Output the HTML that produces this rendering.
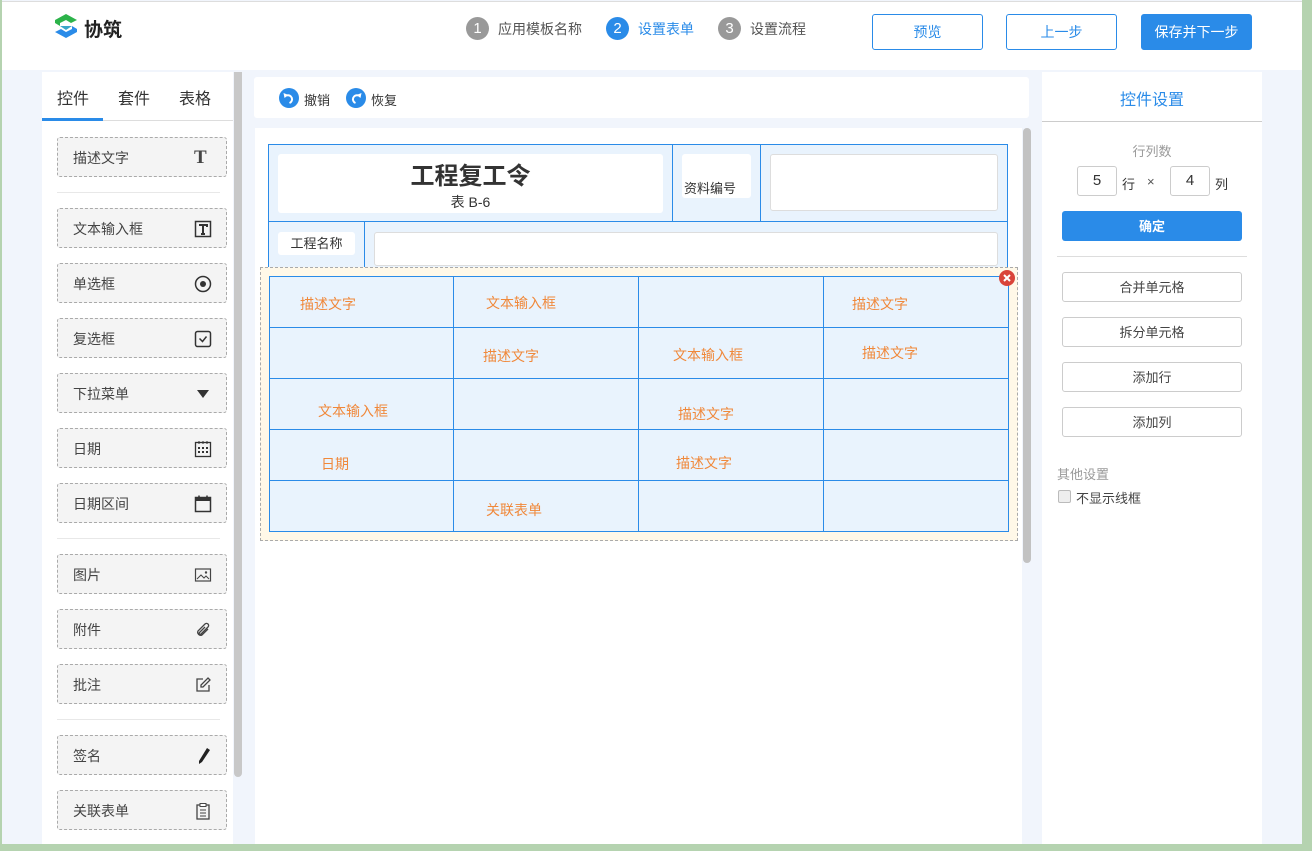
<!DOCTYPE html>
<html><head><meta charset="utf-8"><style>
*{box-sizing:border-box;margin:0;padding:0}
body{width:1312px;height:851px;overflow:hidden;background:#b5d3b0;font-family:"Liberation Sans","Noto Sans CJK SC",sans-serif;position:relative;color:#333}
.abs{position:absolute}
.app{position:absolute;left:2px;top:0;width:1300px;height:844px;background:#f1f5fc}
.hdr{position:absolute;left:2px;top:1px;width:1300px;height:69px;background:#fff;border-top:1px solid #ddd}
.step{position:absolute;top:17px;font-size:14px;color:#555;display:flex;align-items:center}
.step i{font-style:normal;display:inline-block;width:23px;height:23px;border-radius:50%;background:#999;color:#fff;text-align:center;line-height:23px;font-size:15px;margin-right:9px}
.btn{position:absolute;top:14px;height:36px;border:1px solid #2a8be8;border-radius:3px;color:#2a8be8;font-size:14px;text-align:center;line-height:34px;background:#fff}
.item{position:absolute;left:57px;width:170px;height:40px;border:1px dashed #aaa;border-radius:3px;background:#f4f4f4;font-size:14px;color:#444;line-height:40px;padding-left:15px}
.item .ic{position:absolute;right:14px;top:11px;width:18px;height:18px}
.sep{position:absolute;left:57px;width:163px;height:1px;background:#e8e8e8}
.cell{position:absolute;color:#f0883a;font-size:14px}
.rb{position:absolute;left:1062px;width:180px;height:30px;border:1px solid #ccc;border-radius:3px;font-size:13px;color:#444;text-align:center;line-height:29px;background:#fff}
</style></head><body>
<div class="app"></div>
<div class="hdr"></div>
<svg class="abs" style="left:53px;top:13px" width="26" height="26" viewBox="0 0 26 26">
<path d="M13 1 L24 7 L18 10 L13 7 L7 10 L7 13 L2 10 L2 7 Z" fill="#2cb34a"/>
<path d="M13 25 L2 19 L8 16 L13 19 L19 16 L19 13 L24 16 L24 19 Z" fill="#2a8be8"/>
<path d="M7 13 L19 13 L13 17 Z" fill="#3aa6c8"/>
</svg>
<div class="abs" style="left:84px;top:15px;font-size:19px;font-weight:bold;color:#222">协筑</div>
<div class="step" style="left:466px"><i>1</i>应用模板名称</div>
<div class="step" style="left:606px;color:#2a8be8"><i style="background:#2a8be8">2</i>设置表单</div>
<div class="step" style="left:718px"><i>3</i>设置流程</div>
<div class="btn" style="left:872px;width:111px">预览</div>
<div class="btn" style="left:1006px;width:111px">上一步</div>
<div class="btn" style="left:1141px;width:111px;background:#2a8be8;color:#fff">保存并下一步</div>

<div class="abs" style="left:42px;top:72px;width:191px;height:772px;background:#fff"></div>
<div class="abs" style="left:234px;top:72px;width:8px;height:705px;background:#c8c8c8;border-radius:0 0 4px 4px"></div>
<div class="abs" style="left:42px;top:120px;width:191px;height:1px;background:#ddd"></div>
<div class="abs" style="left:42px;top:118px;width:61px;height:3px;background:#2a8be8"></div>
<div class="abs" style="left:57px;top:85px;font-size:16px;color:#333">控件</div>
<div class="abs" style="left:118px;top:85px;font-size:16px;color:#333">套件</div>
<div class="abs" style="left:179px;top:85px;font-size:16px;color:#333">表格</div>

<div class="item" style="top:137px">描述文字<span class="ic" style="font-family:'Liberation Serif',serif;font-weight:bold;font-size:19px;line-height:18px;top:11px">T</span></div>
<div class="sep" style="top:192px"></div>
<div class="item" style="top:208px">文本输入框<svg class="ic" viewBox="0 0 18 18"><rect x="1.5" y="1.5" width="15" height="15" fill="none" stroke="#333" stroke-width="1.5"/><path d="M5 5h8v2M9 5v9M7 14h4" stroke="#333" stroke-width="2" fill="none"/></svg></div>
<div class="item" style="top:263px">单选框<svg class="ic" viewBox="0 0 18 18"><circle cx="9" cy="9" r="7.5" fill="none" stroke="#333" stroke-width="1.5"/><circle cx="9" cy="9" r="3" fill="#333"/></svg></div>
<div class="item" style="top:318px">复选框<svg class="ic" viewBox="0 0 18 18"><rect x="1.5" y="1.5" width="15" height="15" rx="2" fill="none" stroke="#333" stroke-width="1.5"/><path d="M5.5 8.5l3 3 4-5" stroke="#333" stroke-width="1.5" fill="none"/></svg></div>
<div class="item" style="top:373px">下拉菜单<svg class="ic" viewBox="0 0 18 18"><path d="M3 5h12l-6 8z" fill="#333"/></svg></div>
<div class="item" style="top:428px">日期<svg class="ic" viewBox="0 0 18 18"><rect x="1.5" y="2.5" width="15" height="14" fill="none" stroke="#333" stroke-width="1.3"/><path d="M5 1v3M9 1v3M13 1v3" stroke="#333"/><g fill="#333"><rect x="4" y="7" width="2" height="2"/><rect x="8" y="7" width="2" height="2"/><rect x="12" y="7" width="2" height="2"/><rect x="4" y="11" width="2" height="2"/><rect x="8" y="11" width="2" height="2"/><rect x="12" y="11" width="2" height="2"/></g></svg></div>
<div class="item" style="top:483px">日期区间<svg class="ic" viewBox="0 0 18 18"><rect x="1.5" y="2.5" width="15" height="14" fill="none" stroke="#333" stroke-width="1.5"/><rect x="1.5" y="2.5" width="15" height="3.5" fill="#333"/><path d="M5 0.5v3M13 0.5v3" stroke="#333" stroke-width="1.5"/></svg></div>
<div class="sep" style="top:538px"></div>
<div class="item" style="top:554px">图片<svg class="ic" viewBox="0 0 18 18"><rect x="1.5" y="3" width="15" height="12" fill="none" stroke="#444" stroke-width="1.2"/><path d="M3 13l4-4 3 3 2-2 3 3" stroke="#444" fill="none"/><circle cx="12" cy="6.5" r="1.2" fill="#444"/></svg></div>
<div class="item" style="top:609px">附件<svg class="ic" viewBox="0 0 18 18"><path d="M14 8l-6 6a3 3 0 01-4-4l7-7a2 2 0 013 3l-7 7a1 1 0 01-1.5-1.5L11 6" stroke="#444" stroke-width="1.3" fill="none"/></svg></div>
<div class="item" style="top:664px">批注<svg class="ic" viewBox="0 0 18 18"><path d="M9 3H3v12h12V9" stroke="#444" stroke-width="1.3" fill="none"/><path d="M14 2l2 2-7 7H7V9z" stroke="#444" stroke-width="1.3" fill="none"/></svg></div>
<div class="sep" style="top:719px"></div>
<div class="item" style="top:735px">签名<svg class="ic" viewBox="0 0 18 18"><path d="M13 1l3 2-8 12-3 2 0-3z" fill="#222"/></svg></div>
<div class="item" style="top:790px">关联表单<svg class="ic" viewBox="0 0 18 18"><rect x="3" y="3" width="12" height="14" fill="none" stroke="#444" stroke-width="1.3"/><rect x="6" y="1.5" width="6" height="3" fill="#fff" stroke="#444"/><path d="M6 8h6M6 11h6M6 14h6" stroke="#444"/></svg></div>

<div class="abs" style="left:254px;top:77px;width:775px;height:41px;background:#fff;border-radius:3px"></div>
<svg class="abs" style="left:279px;top:88px" width="20" height="20" viewBox="0 0 20 20"><circle cx="10" cy="10" r="10" fill="#2a8be8"/><path d="M7.5 7.5a4 4 0 113 7.5" stroke="#fff" stroke-width="2" fill="none"/><path d="M4.5 5l1 5 4-3z" fill="#fff"/></svg>
<div class="abs" style="left:304px;top:90px;font-size:13px">撤销</div>
<svg class="abs" style="left:346px;top:88px" width="20" height="20" viewBox="0 0 20 20"><circle cx="10" cy="10" r="10" fill="#2a8be8"/><path d="M12.5 7.5a4 4 0 10-3 7.5" stroke="#fff" stroke-width="2" fill="none"/><path d="M15.5 5l-1 5-4-3z" fill="#fff"/></svg>
<div class="abs" style="left:371px;top:90px;font-size:13px">恢复</div>
<div class="abs" style="left:255px;top:128px;width:767px;height:716px;background:#fff"></div>
<div class="abs" style="left:1023px;top:128px;width:8px;height:435px;background:#c2c2c2;border-radius:4px"></div>

<div class="abs" style="left:268px;top:144px;width:740px;height:125px;background:#e9f3fd;border:1px solid #2a8be8;border-bottom:none"></div>
<div class="abs" style="left:268px;top:221px;width:740px;height:1px;background:#2a8be8"></div>
<div class="abs" style="left:672px;top:144px;width:1px;height:78px;background:#2a8be8"></div>
<div class="abs" style="left:760px;top:144px;width:1px;height:78px;background:#2a8be8"></div>
<div class="abs" style="left:364px;top:222px;width:1px;height:47px;background:#2a8be8"></div>
<div class="abs" style="left:278px;top:154px;width:385px;height:59px;background:#fff;border-radius:3px"></div>
<div class="abs" style="left:278px;top:156px;width:385px;text-align:center;font-size:24px;font-weight:bold;color:#333">工程复工令</div>
<div class="abs" style="left:278px;top:192px;width:385px;text-align:center;font-size:14px;color:#333">表 B-6</div>
<div class="abs" style="left:682px;top:154px;width:69px;height:44px;background:#fff;border-radius:3px"></div>
<div class="abs" style="left:684px;top:178px;font-size:13px">资料编号</div>
<div class="abs" style="left:770px;top:154px;width:228px;height:57px;background:#fff;border:1px solid #ddd;border-radius:3px"></div>
<div class="abs" style="left:278px;top:232px;width:77px;height:23px;background:#fff;border-radius:3px;font-size:13px;text-align:center;line-height:23px">工程名称</div>
<div class="abs" style="left:374px;top:232px;width:624px;height:34px;background:#fff;border:1px solid #ddd;border-radius:3px"></div>

<div class="abs" style="left:260px;top:267px;width:758px;height:274px;background:#fff8e8;border:1px dashed #aaa"></div>
<div class="abs" style="left:269px;top:276px;width:740px;height:256px;background:#e9f3fd;border:1px solid #2a8be8"></div>
<div class="abs" style="left:269px;top:327px;width:740px;height:1px;background:#2a8be8"></div>
<div class="abs" style="left:269px;top:378px;width:740px;height:1px;background:#2a8be8"></div>
<div class="abs" style="left:269px;top:429px;width:740px;height:1px;background:#2a8be8"></div>
<div class="abs" style="left:269px;top:480px;width:740px;height:1px;background:#2a8be8"></div>
<div class="abs" style="left:453px;top:276px;width:1px;height:256px;background:#2a8be8"></div>
<div class="abs" style="left:638px;top:276px;width:1px;height:256px;background:#2a8be8"></div>
<div class="abs" style="left:823px;top:276px;width:1px;height:256px;background:#2a8be8"></div>
<svg class="abs" style="left:999px;top:270px" width="16" height="16" viewBox="0 0 16 16"><circle cx="8" cy="8" r="8" fill="#d9443a"/><path d="M5 5l6 6M11 5l-6 6" stroke="#fff" stroke-width="2"/></svg>
<div class="cell" style="left:300px;top:294px">描述文字</div>
<div class="cell" style="left:486px;top:293px">文本输入框</div>
<div class="cell" style="left:852px;top:294px">描述文字</div>
<div class="cell" style="left:483px;top:346px">描述文字</div>
<div class="cell" style="left:673px;top:345px">文本输入框</div>
<div class="cell" style="left:862px;top:343px">描述文字</div>
<div class="cell" style="left:318px;top:401px">文本输入框</div>
<div class="cell" style="left:678px;top:404px">描述文字</div>
<div class="cell" style="left:321px;top:454px">日期</div>
<div class="cell" style="left:676px;top:453px">描述文字</div>
<div class="cell" style="left:486px;top:500px">关联表单</div>

<div class="abs" style="left:1042px;top:72px;width:220px;height:772px;background:#fff"></div>
<div class="abs" style="left:1042px;top:121px;width:220px;height:1px;background:#ccc"></div>
<div class="abs" style="left:1042px;top:86px;width:220px;text-align:center;font-size:16px;color:#2a8be8">控件设置</div>
<div class="abs" style="left:1042px;top:141px;width:220px;text-align:center;font-size:13px;color:#999">行列数</div>
<div class="abs" style="left:1077px;top:166px;width:40px;height:30px;border:1px solid #ccc;border-radius:3px;text-align:center;line-height:28px;font-size:15px">5</div>
<div class="abs" style="left:1122px;top:174px;font-size:13px">行</div>
<div class="abs" style="left:1147px;top:174px;font-size:13px;color:#555">×</div>
<div class="abs" style="left:1170px;top:166px;width:40px;height:30px;border:1px solid #ccc;border-radius:3px;text-align:center;line-height:28px;font-size:15px">4</div>
<div class="abs" style="left:1215px;top:174px;font-size:13px">列</div>
<div class="abs" style="left:1062px;top:211px;width:180px;height:30px;background:#2a8be8;border-radius:3px;color:#fff;text-align:center;line-height:31px;font-size:13px;font-weight:bold">确定</div>
<div class="abs" style="left:1057px;top:256px;width:190px;height:1px;background:#ddd"></div>
<div class="rb" style="top:272px">合并单元格</div>
<div class="rb" style="top:317px">拆分单元格</div>
<div class="rb" style="top:362px">添加行</div>
<div class="rb" style="top:407px">添加列</div>
<div class="abs" style="left:1057px;top:464px;font-size:13px;color:#999">其他设置</div>
<div class="abs" style="left:1058px;top:490px;width:13px;height:13px;border:1px solid #bbb;border-radius:2px;background:#eee"></div>
<div class="abs" style="left:1076px;top:488px;font-size:13px;color:#444">不显示线框</div>
</body></html>
